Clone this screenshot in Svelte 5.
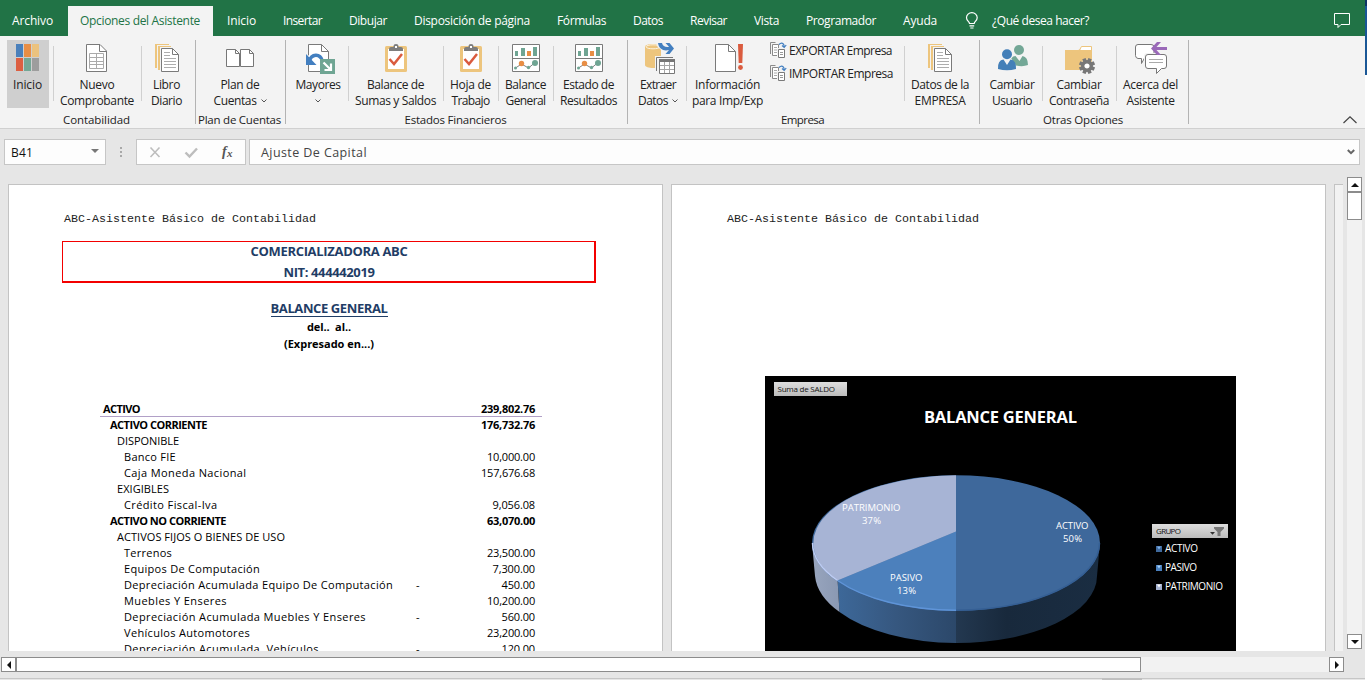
<script>
  // Spreads a text evenly over a given width by adjusting its letter spacing.
  function fit(node, width) {
    const apply = (w) => {
      if (!w) return;
      node.style.letterSpacing = '0px';
      const natural = node.getBoundingClientRect().width;
      const n = node.textContent.length;
      node.style.letterSpacing = `${(w - natural) / n}px`;
    };
    apply(width);
    return { update: apply };
  }

  const tabs = [
    ['Inicio', 29], ['Insertar', 39], ['Dibujar', 38], ['Disposición de página', 116],
    ['Fórmulas', 49], ['Datos', 30], ['Revisar', 37], ['Vista', 25],
    ['Programador', 70], ['Ayuda', 34]
  ];

  // x / w: left edge and width of the button, also the origin of its icon drawing
  const groups = [
    { name: 'Contabilidad', nw: 67, items: [
      { icon: 'home', x: 3, w: 50, l: [['Inicio', 29]], on: true },
      { icon: 'voucher', x: 54, w: 87, l: [['Nuevo', 35], ['Comprobante', 74]] },
      { icon: 'book', x: 142, w: 50, dx: 0, l: [['Libro', 27], ['Diario', 31]] }
    ] },
    { name: 'Plan de Cuentas', nw: 83, items: [
      { icon: 'plan', x: 199, w: 83, l: [['Plan de', 39], ['Cuentas', 43]], drop: true }
    ] },
    { name: 'Estados Financieros', nw: 102, items: [
      { icon: 'ledger', x: 289, w: 59, l: [['Mayores', 45], ['', 0]], drop: true },
      { icon: 'clip', x: 349, w: 94, dx: 0, l: [['Balance de', 57], ['Sumas y Saldos', 81]] },
      { icon: 'clip', x: 444, w: 54, dx: 75, l: [['Hoja de', 41], ['Trabajo', 38]] },
      { icon: 'chart', x: 499, w: 54, dx: 0, l: [['Balance', 41], ['General', 40]] },
      { icon: 'chart', x: 554, w: 70, dx: 63, l: [['Estado de', 51], ['Resultados', 57]] }
    ] },
    { name: 'Empresa', nw: 43, items: [
      { icon: 'extract', x: 631, w: 55, l: [['Extraer', 36], ['Datos', 30]], drop: true },
      { icon: 'info', x: 687, w: 82, l: [['Información', 65], ['para Imp/Exp', 71]], nosep: true },
      { list: [['EXPORTAR Empresa', 103], ['IMPORTAR Empresa', 104]], w: 135 },
      { icon: 'book', x: 905, w: 71, dx: 773, l: [['Datos de la', 58], ['EMPRESA', 51]] }
    ] },
    { name: 'Otras Opciones', nw: 80, items: [
      { icon: 'users', x: 983, w: 59, l: [['Cambiar', 45], ['Usuario', 40]] },
      { icon: 'folder', x: 1043, w: 73, l: [['Cambiar', 45], ['Contraseña', 60]] },
      { icon: 'about', x: 1117, w: 68, l: [['Acerca del', 55], ['Asistente', 48]] }
    ] }
  ];

  const rows = [
    [0, 'ACTIVO', 37, '239,802.76'],
    [1, 'ACTIVO CORRIENTE', 97, '176,732.76'],
    [2, 'DISPONIBLE', 62, ''],
    [3, 'Banco FIE', 52, '10,000.00'],
    [3, 'Caja Moneda Nacional', 122.5, '157,676.68'],
    [2, 'EXIGIBLES', 52, ''],
    [3, 'Crédito Fiscal-Iva', 93.5, '9,056.08'],
    [1, 'ACTIVO NO CORRIENTE', 116, '63,070.00'],
    [2, 'ACTIVOS FIJOS O BIENES DE USO', 168, ''],
    [3, 'Terrenos', 48, '23,500.00'],
    [3, 'Equipos De Computación', 136, '7,300.00'],
    [3, 'Depreciación Acumulada Equipo De Computación', 269, '450.00', true],
    [3, 'Muebles Y Enseres', 103, '10,200.00'],
    [3, 'Depreciación Acumulada Muebles Y Enseres', 242, '560.00', true],
    [3, 'Vehículos Automotores', 126, '23,200.00'],
    [3, 'Depreciación Acumulada  Vehículos', 195, '120.00', true]
  ];
  const amountWidth = { 10: 54, 9: 48, 8: 42.5, 6: 33.5 };

  const legend = [
    ['ACTIVO', 33, 548, '#3f699c', '#7fb2ea'],
    ['PASIVO', 32, 567, '#4a80bd', '#a5d2ff'],
    ['PATRIMONIO', 58, 586, '#a3b0cf', '#ffffff']
  ];
</script>

{#snippet icon(name, dx)}
  {#if name === 'home'}
    <rect x="16" y="44" width="7" height="13" fill="#4a80bb" /><rect x="24" y="44" width="7" height="13" fill="#e88e45" /><rect x="32" y="44" width="7" height="13" fill="#ebc27e" />
    <rect x="16" y="58" width="7" height="13" fill="#dc5f42" /><rect x="24" y="58" width="7" height="13" fill="#73a796" /><rect x="32" y="58" width="7" height="13" fill="#9d9d9d" />
  {:else if name === 'voucher'}
    <path d="M86.5 44.5H100L106.5 51V71.5H86.5Z" fill="#fff" stroke="#7a7a7a" /><path d="M99.5 44.5V51.5H106.5" fill="none" stroke="#7a7a7a" />
    <path d="M89.5 53.5H103.5V68.5H89.5ZM89.5 57.5H103.5M89.5 61.5H103.5M89.5 64.5H103.5M96.5 53.5V68.5" fill="none" stroke="#aaa" />
  {:else if name === 'book'}
    <g transform="translate({dx} 0)">
      <path d="M155 44H169V45H157V68H155ZM158 46H171V47H160V70H158Z" fill="#edc57d" />
      <path d="M161.5 48.5H172.5L178.5 54.5V71.5H161.5Z" fill="#fff" stroke="#7a7a7a" /><path d="M172.5 48.5V54.5H178.5" fill="none" stroke="#7a7a7a" />
      <path d="M164 52.5H170M164 55.5H170M164 58.5H176M164 61.5H176M164 64.5H176M164 67.5H176" stroke="#adadad" />
    </g>
  {:else if name === 'plan'}
    {#each [0, 14] as o}
      <path d="M{226.5 + o} 49.5H{235.5 + o}L{239.5 + o} 53.5V66.5H{226.5 + o}Z" fill="#fff" stroke="#777" />
      <path d="M{235.5 + o} 49.5V53.5H{239.5 + o}" fill="none" stroke="#777" />
    {/each}
  {:else if name === 'ledger'}
    <path d="M308.5 44.5H321.5L328.5 51.5V71.5H308.5Z" fill="#fff" stroke="#7a7a7a" /><path d="M321.5 44.5V51.5H328.5" fill="none" stroke="#7a7a7a" />
    <path d="M308 60C312 53 320 53 323 60" fill="none" stroke="#fff" stroke-width="5" />
    <path d="M309 61.500C311.500 53.500 320 53 322.500 61" fill="none" stroke="#437fc0" stroke-width="3.400" /><path d="M306 54V65H316.500Z" fill="#437fc0" />
    <rect x="320" y="59" width="15" height="15" fill="#6fa593" /><path d="M323.500 62.500L330.500 69.500M331 63.500V70H324.500" fill="none" stroke="#fff" stroke-width="2.200" />
  {:else if name === 'clip'}
    <g transform="translate({dx} 0)">
      <rect x="385" y="46" width="22" height="26" rx="1.500" fill="#edc57d" /><rect x="388" y="49" width="16" height="20" fill="#fff" />
      <path d="M389 51V49Q389 47 391 47H393.500V46Q393.500 44 396 44Q398.500 44 398.500 46V47H401Q403 47 403 49V51Z" fill="#7d7d7d" /><rect x="395" y="46" width="2" height="2" fill="#fff" />
      <path d="M389.500 59L394 64L402 54" fill="none" stroke="#da5b3e" stroke-width="2.500" />
    </g>
  {:else if name === 'chart'}
    <g transform="translate({dx} 0)">
      <path d="M512.500 44.500H539.500V71.500H512.500ZM512.500 58.500H539.500" fill="#fff" stroke="#7a7a7a" />
      <path d="M515 51H518V56H515ZM521 48H525V56H521ZM533 47H537V56H533Z" fill="#6fa593" /><path d="M527 51H531V56H527Z" fill="#e88e45" />
      <path d="M515.500 68L521.500 64L528.500 68L535 62.500" fill="none" stroke="#7f7f7f" />
      <circle cx="515.500" cy="68" r="1.500" fill="#6fa593" /><circle cx="528.500" cy="67.500" r="1.700" fill="#6fa593" />
      <circle cx="521.500" cy="63.500" r="2.700" fill="#e88e45" /><circle cx="535" cy="63" r="3" fill="#6fa593" />
    </g>
  {:else if name === 'extract'}
    <path d="M645 46.500C645 43 661 43 661 46.500V65C661 69 645 69 645 65Z" fill="#edc57d" /><ellipse cx="653" cy="46.800" rx="7" ry="2" fill="#edc57d" stroke="#fdf3de" />
    <path d="M656.500 43H662C662.500 46.500 666 47.500 669 46.500L665 43H669.500L674.500 48.500L669.500 54H665L669 50C663 51.500 658 49 656.500 43Z" fill="#f3f3f3" stroke="#f3f3f3" stroke-width="1" />
    <path d="M658 43H662C662.500 46 666 47.500 669 46.700L665.500 43H669.500L674 48.500L669.500 54H665.500L669 50C663.500 51.500 659 49 658 43Z" fill="#437fc0" />
    <rect x="655" y="56" width="21" height="19" fill="#f3f3f3" /><path d="M656.500 71V57.500H673" fill="none" stroke="#777" />
    <path d="M659.500 59.500H674.500V73.500H659.500Z" fill="#fff" stroke="#777" /><rect x="659" y="59" width="16" height="3" fill="#777" />
    <path d="M660 65.500H674M660 69.500H674M664.500 62V73M669.500 62V73" stroke="#a5a5a5" />
  {:else if name === 'info'}
    <path d="M715.500 44.500H728.500L735.500 51.500V71.500H715.500Z" fill="#fff" stroke="#7a7a7a" /><path d="M728.500 44.500V51.500H735.500" fill="none" stroke="#7a7a7a" />
    <path d="M738 44H743L742.300 63H738.700Z" fill="#da5b3e" /><circle cx="740.500" cy="67.500" r="2.400" fill="#da5b3e" />
  {:else if name === 'users'}
    <circle cx="1019" cy="50" r="5" fill="#73a796" /><path d="M1011 58Q1013 56 1015.500 56L1019.500 61L1022.500 56Q1028 57 1028 65Q1023 67 1016 65.500Z" fill="#73a796" />
    <circle cx="1007" cy="54.200" r="6" fill="#f3f3f3" /><circle cx="1007" cy="54.200" r="5" fill="#437fb8" />
    <path d="M998 69Q997.500 60 1003.500 59.500L1007 65L1010.500 59.500Q1016.500 60 1016 69Q1007 71.500 998 69Z" fill="#437fb8" />
  {:else if name === 'folder'}
    <path d="M1079 51L1081.500 46.500H1091.500V54" fill="#fff" stroke="#edc57d" /><path d="M1065 50H1078L1080 49.500L1081 50H1092V70H1065Z" fill="#edc57d" />
    <g transform="translate(1087 66)"><circle r="7.500" fill="#f3f3f3" opacity=".3" /><circle r="4.300" fill="#fff" stroke="#777" stroke-width="3.400" />
      {#each [0, 45, 90, 135, 180, 225, 270, 315] as a}<rect x="-1.800" y="-8" width="3.600" height="3.500" fill="#777" transform="rotate({a + 22.5})" />{/each}</g>
  {:else if name === 'about'}
    <path d="M1138 44.500H1151Q1154 44.500 1154 47V58H1144.500L1141.500 63.500V58.500H1138Q1135.500 58 1135.500 55.500V47Q1135.500 44.500 1138 44.500Z" fill="#fff" stroke="#777" />
    <rect x="1144" y="53" width="24" height="17" rx="3" fill="#f3f3f3" />
    <path d="M1148 54.500H1164Q1166.500 54.500 1166.500 57V66Q1166.500 68.500 1164 68.500H1161.500L1156.500 73.500V68.500H1148Q1145.500 68.500 1145.500 66V57Q1145.500 54.500 1148 54.500Z" fill="#fff" stroke="#777" />
    <path d="M1149 59.500H1163M1149 62.500H1163" stroke="#aaa" />
    <path d="M1151 48.500L1157 42H1161L1156.500 47H1167V50H1156.500L1161 55H1157Z" fill="#9a69b8" />
  {/if}
{/snippet}

<div class="app">
  <div class="main">
    <nav class="tabs">
      <span class="file"><span use:fit={41}>Archivo</span></span>
      <span class="active"><span use:fit={120}>Opciones del Asistente</span></span>
      {#each tabs as [t, w]}
        <span class="tab"><span use:fit={w}>{t}</span></span>
      {/each}
      <svg class="bulb" width="14" height="18" viewBox="0 0 14 18" fill="none" stroke="#fff" stroke-width="1.200">
        <path d="M4.500 11.500C4.500 9.500 1.500 9 1.500 5.700A5.300 5 0 0 1 12.200 5.700C12.200 9 9.200 9.500 9.200 11.500ZM4.500 13.800H9.200M5.300 16H8.500" />
      </svg>
      <span class="ask" use:fit={97}>¿Qué desea hacer?</span>
      <svg class="comment" width="17" height="16" viewBox="0 0 17 16" fill="none" stroke="#fff"><path d="M.500.500H15.500V11.500H7L4 14.500V11.500H.500Z" /></svg>
    </nav>

    <div class="ribbon">
      {#each groups as g}
        <section class="group">
          <div class="items">
            {#each g.items as b, i}
              {#if b.list}
                <div class="list" style:width="{b.w}px">
                  {#each b.list as [t, w]}
                    <div class="small">
                      <svg width="17" height="17" viewBox="0 0 17 17" fill="none">
                        <path d="M.500 12V.500H5.500" stroke="#8a8a8a" /><path d="M2.500 2.500H8.500V13.500H2.500Z" fill="#fff" stroke="#8a8a8a" />
                        <path d="M4 5.500H7M4 8H7M4 10.500H7" stroke="#aaa" />
                        <path d="M7 6H17V17H7Z" fill="#f3f3f3" /><path d="M8.500 7.500H14.500V15.500H8.500Z" fill="#fff" stroke="#7a7a7a" /><path d="M10 10.500H13M10 12.500H13" stroke="#999" />
                        <path d="M9 2.500Q12-.500 14 3V5M12 3.500L14.200 5.500L16.200 3" stroke="#437fc0" stroke-width="1.200" />
                      </svg>
                      <span use:fit={w}>{t}</span>
                    </div>
                  {/each}
                </div>
              {:else}
                <div class="btn" class:on={b.on} style:width="{b.w}px">
                  <svg width={b.w} height="36" viewBox="{b.x} 40 {b.w} 36">{@render icon(b.icon, b.dx)}</svg>
                  {#each b.l as [t, w], k}
                    <div class="line">
                      {#if t}<span use:fit={w}>{t}</span>{/if}
                      {#if b.drop && k === 1}
                        <svg class:after={t} width="6" height="4" viewBox="0 0 6 4" fill="none" stroke="#555"><path d="M.500.500L3 3L5.500.500" /></svg>
                      {/if}
                    </div>
                  {/each}
                </div>
              {/if}
              {#if i < g.items.length - 1 && !b.nosep}<i class="sep"></i>{/if}
            {/each}
          </div>
          <div class="gname"><span use:fit={g.nw}>{g.name}</span></div>
        </section>
      {/each}
      <svg class="collapse" width="14" height="8" viewBox="0 0 14 8" fill="none" stroke="#444" stroke-width="1.200"><path d="M.500 7L7 .800L13.500 7" /></svg>
    </div>

    <div class="formula">
      <div class="box name"><span use:fit={22}>B41</span><i class="tri"></i></div>
      <div class="dots"><i></i><i></i><i></i></div>
      <div class="box tools">
        <svg width="108" height="24" viewBox="137 140 108 24" fill="none">
          <path d="M150.500 147.500L159.500 157M159.500 147.500L150.500 157" stroke="#bdbdbd" stroke-width="1.600" />
          <path d="M185.500 152.500L189.500 156.500L197 148.500" stroke="#bdbdbd" stroke-width="2.400" />
          <text x="222" y="156" class="fx">f</text><text x="227" y="156.500" class="fx x">x</text>
        </svg>
      </div>
      <div class="box input"><span use:fit={106}>Ajuste De Capital</span>
        <svg width="8" height="6" viewBox="0 0 8 6" fill="none" stroke="#666" stroke-width="2"><path d="M.800 1L4 4.200L7.200 1" /></svg>
      </div>
    </div>

    <div class="work">
      <div class="sheets">
        <article class="page">
          <header><span use:fit={252}>ABC-Asistente Básico de Contabilidad</span></header>
          <div class="company">
            <div><span use:fit={157}>COMERCIALIZADORA ABC</span></div>
            <div><span use:fit={91}>NIT: 444442019</span></div>
          </div>
          <div class="heading">
            <h1><span use:fit={117}>BALANCE GENERAL</span></h1>
            <p><span use:fit={44}>del..&nbsp; al..</span></p>
            <p><span use:fit={90}>(Expresado en...)</span></p>
          </div>
          <div class="table">
            {#each rows as [lv, t, w, n, neg]}
              <div class="row lv{lv}">
                <span class="lbl"><span use:fit={w}>{t}</span></span>
                <span class="neg">{neg ? '-' : ''}</span>
                <span class="num">{#if n}<span use:fit={amountWidth[n.length]}>{n}</span>{/if}</span>
              </div>
            {/each}
          </div>
        </article>

        <article class="page">
          <header><span use:fit={252}>ABC-Asistente Básico de Contabilidad</span></header>
          <svg class="pie" width="471" height="275" viewBox="765 376 471 275">
            <defs>
              <linearGradient id="btn" x1="0" y1="0" x2="0" y2="1"><stop offset="0" stop-color="#dedede" /><stop offset="1" stop-color="#bcbcbc" /></linearGradient>
              <linearGradient id="sideA"><stop offset="0" stop-color="#233850" /><stop offset=".35" stop-color="#18293c" /><stop offset="1" stop-color="#1a2d42" /></linearGradient>
              <linearGradient id="sideB"><stop offset="0" stop-color="#3d6899" /><stop offset=".5" stop-color="#36577f" /><stop offset="1" stop-color="#2c486a" /></linearGradient>
              <linearGradient id="sideC"><stop offset="0" stop-color="#98a5be" /><stop offset="1" stop-color="#8a98b2" /></linearGradient>
            </defs>
            <rect x="765" y="376" width="471" height="275" fill="#000" />
            <path d="M956 600H956V643A141 67 0 0 0 1097 576L1100 543Z" fill="url(#sideA)" />
            <path d="M837.500 579L839.500 612A141 67 0 0 0 956 643V600Z" fill="url(#sideB)" />
            <path d="M812 543L815 576Q817 596 839.500 612L837.500 579Z" fill="url(#sideC)" />
            <ellipse cx="956" cy="543" rx="144" ry="67.700" fill="#3e689b" />
            <path d="M956 531.500V610.700A144 67.700 0 0 1 837.500 580.500Z" fill="#4c80bc" />
            <path d="M956 531.500L837.500 580.500A144 67.700 0 0 1 956 475.300Z" fill="#a7b4d5" />
            <path d="M837.500 580.500A143.500 67.200 0 0 0 956 610.200" fill="none" stroke="#5f94d8" stroke-width="1.400" />
            <path d="M812.500 543A143.500 67.200 0 0 0 837.500 580.500" fill="none" stroke="#bfcdf3" stroke-width="1.500" />
            <path d="M956 610.200A143.500 67.200 0 0 0 1099.500 543" fill="none" stroke="#355f94" stroke-width="1.500" />
            <rect x="774" y="382" width="73" height="14" fill="url(#btn)" />
            <text class="pb" x="777.500" y="392" textLength="57.500">Suma de SALDO</text>
            <text class="pt" x="924" y="423" textLength="153">BALANCE GENERAL</text>
            <g class="pl">
              <text x="842" y="511" textLength="58.500">PATRIMONIO</text><text x="862" y="524" textLength="19">37%</text>
              <text x="1056" y="529" textLength="32.500">ACTIVO</text><text x="1063" y="542" textLength="19">50%</text>
              <text x="890" y="581" textLength="32.500">PASIVO</text><text x="897" y="594" textLength="19">13%</text>
            </g>
            <rect x="1152" y="524" width="76" height="14" fill="url(#btn)" />
            <text class="pb" x="1156" y="534" textLength="25">GRUPO</text>
            <path d="M1210 532H1215L1212.500 534.800Z" fill="#333" /><path d="M1214 527H1224V528.500L1220.500 532V536H1217.500V532L1214 528.500Z" fill="#777" />
            {#each legend as [t, w, y, c, hi]}
              <rect x="1156" y={y - 2} width="6" height="6" fill={c} /><path d="M1157 {y - 1.5}H1161L1159 {y + 1.5}Z" fill={hi} />
              <text class="leg" x="1165" y={y + 4} textLength={w}>{t}</text>
            {/each}
          </svg>
        </article>
        <article class="page next"></article>
      </div>
      <div class="vbar">
        <div class="sb"><i class="up"></i></div><div class="vthumb"></div><div class="vtrack"></div><div class="sb"><i class="down"></i></div>
      </div>
    </div>
    <div class="hbar">
      <div class="sb"><i class="left"></i></div><div class="hthumb"></div><div class="htrack"></div><div class="sb"><i class="right"></i></div>
    </div>
    <div class="foot"><i></i></div>
  </div>
  <div class="edge"></div>
</div>

<style>
  :global(body) { margin: 0; background: #fff; overflow: hidden; }
  .app { width: 1367px; height: 680px; display: flex; overflow: hidden; font: 12px/16px "Open Sans", "Noto Sans", sans-serif; color: #222; }
  .main { width: 1365px; height: 680px; display: flex; flex-direction: column; background: #e6e6e6; }
  .edge { width: 2px; height: 75px; background: linear-gradient(#0f3563 6px, #1a5796 6px); }
  span { white-space: pre; }
  i { display: block; box-sizing: border-box; flex: none; }
  svg { display: block; flex: none; }

  .tabs { height: 36px; flex: none; background: #217346; color: #fff; display: flex; align-items: flex-start; font-size: 12px; }
  .tabs > span { line-height: 30px; padding-top: 6px; white-space: nowrap; }
  .file { width: 56px; padding-left: 12px; }
  .tabs .active { width: 121px; height: 30px; margin-top: 6px; padding: 0 12px; background: #f3f3f3; color: #217346; }
  .tab { margin-left: 14px; margin-right: 13px; }
  .bulb { margin: 12px 0 0 15px; }
  .tabs .ask { margin-left: 13px; }
  .comment { margin: 13px 14px 0 auto; }

  .ribbon { height: 92px; flex: none; background: #f3f3f3; border-bottom: 1px solid #d0d0d0; display: flex; align-items: flex-start; }
  .group { height: 84px; margin-top: 4px; padding: 0 3px; border-right: 1px solid #b3b3b3; }
  .items { display: flex; height: 72px; }
  .btn { display: flex; flex-direction: column; align-items: center; font-size: 12px; }
  .btn.on { background: linear-gradient(#cfcfcf, #cfcfcf) 4px 0 / 42px 68px no-repeat; }
  .btn > svg { margin-bottom: 1px; }
  .line { height: 16px; display: flex; align-items: center; line-height: 16px; padding-right: 1px; }
  .after { margin-left: 4px; }
  .sep { width: 1px; height: 55px; margin-top: 6px; background: #d0d0d0; }
  .gname { height: 16px; margin: 0 -2px 0 -3px; text-align: center; line-height: 16px; font-size: 11.500px; padding-right: 1px; }
  .list { display: flex; flex-direction: column; gap: 6px; padding-top: 2px; }
  .small { display: flex; height: 17px; align-items: center; gap: 2px; padding-left: 1px; }
  .collapse { margin: 80px 8px 0 auto; }

  .formula { height: 27px; flex: none; margin: 10px 5px 0 4px; display: flex; }
  .box { height: 24px; border: 1px solid #c6c6c6; background: #fdfdfd; display: flex; align-items: center; font-size: 12.500px; color: #444; }
  .box > span { padding-top: 1px; }
  .name { width: 94px; padding-left: 6px; color: #111; justify-content: space-between; font-size: 12px; }
  .tri { border: 4px solid transparent; border-top: 4px solid #777; border-bottom: 0; margin-right: 6px; margin-top: -2px; }
  .dots { width: 30px; display: flex; flex-direction: column; align-items: center; gap: 2px; padding-top: 8px; }
  .dots i { width: 2px; height: 2px; background: #a8a8a8; }
  .tools { width: 108px; margin-right: 3px; }
  .fx { font: italic bold 14px "Liberation Serif", serif; fill: #555; }
  .fx.x { font-size: 11px; }
  .input { flex: 1; padding-left: 11px; padding-right: 4px; justify-content: space-between; }

  .work { height: 485px; flex: none; display: flex; }
  .sheets { width: 1343px; height: 467px; padding-top: 18px; display: flex; overflow: hidden; }
  .page { width: 653px; height: 480px; flex: none; margin-left: 8px; background: #fff; border: 1px solid #c3c3c3; }
  .page.next { background: #f2f2f2; }
  header { height: 15px; padding: 26px 0 0 55px; font: 11.670px/17px "Liberation Mono", monospace; color: #222; }
  .company { width: 531px; height: 39px; margin: 15px 0 0 53px; border: 1px solid #f30000; border-right-width: 2px; border-bottom-width: 2px; color: #1f3d66; font: bold 13px/21px "Open Sans", sans-serif; text-align: center; }
  .company div { height: 21px; line-height: 19px; padding-left: 1px; }
  .heading { width: 534px; margin: 15px 0 0 53px; text-align: center; font-family: "Open Sans", sans-serif; color: #000; font-weight: bold; }
  h1 { margin: 0; font-size: 13px; line-height: 20px; color: #1f3d66; }
  h1 span { display: inline-block; border-bottom: 1px solid #1f3d66; line-height: 15px; }
  .heading p { margin: 0; font-size: 11px; line-height: 17px; }
  .table { width: 442px; margin: 49px 0 0 91px; color: #000; font: 11px/16px "Open Sans", sans-serif; }
  .row { height: 16px; display: flex; }
  .lbl { width: 316px; }
  .neg { width: 20px; }
  .num { width: 99px; text-align: right; }
  .lv0, .lv1 { font-weight: bold; }
  .lv0 { height: 15px; border-bottom: 1px solid #b1a0c7; }
  .lv0 .lbl { padding-left: 3px; width: 313px; }
  .lv1 .lbl { padding-left: 10px; width: 306px; }
  .lv2 .lbl { padding-left: 17px; width: 299px; }
  .lv3 .lbl { padding-left: 24px; width: 292px; }

  .pie { margin: 150px 0 0 93px; }
  .pb { font: 8px "Open Sans", sans-serif; fill: #111; }
  .pt { font: bold 16.500px "Open Sans", sans-serif; fill: #fff; }
  .pl { font: 9.500px "Open Sans", sans-serif; fill: #fff; }
  .leg { font: 10px "Open Sans", sans-serif; fill: #fff; }

  .vbar { width: 16px; height: 474px; margin: 11px 0 0 4px; display: flex; flex-direction: column; }
  .sb { width: 13px; height: 13px; flex: none; border: 1px solid #8c8c8c; background: #fff; display: flex; align-items: center; justify-content: center; }
  .vthumb { width: 13px; height: 26px; border: 1px solid #8c8c8c; background: #fff; }
  .vtrack { width: 15px; height: 414px; background: #f2f2f2; }
  .up, .down { border: 4px solid transparent; }
  .up { border-top: 0; border-bottom-color: #111; }
  .down { border-bottom: 0; border-top-color: #111; }
  .left, .right { border: 4px solid transparent; }
  .left { border-left: 0; border-right-color: #111; }
  .right { border-right: 0; border-left-color: #111; }
  .hbar { height: 15px; flex: none; margin: 6px 0 0 1px; display: flex; }
  .hthumb { width: 1123px; height: 13px; border: 1px solid #8c8c8c; background: #fff; }
  .htrack { width: 188px; background: #f2f2f2; }
  .foot { height: 1px; margin-top: 6px; border-top: 1px solid #c6c6c6; }
  .foot i { width: 40px; height: 2px; margin: -1px 0 0 1102px; background: #c0c0c0; }
</style>
